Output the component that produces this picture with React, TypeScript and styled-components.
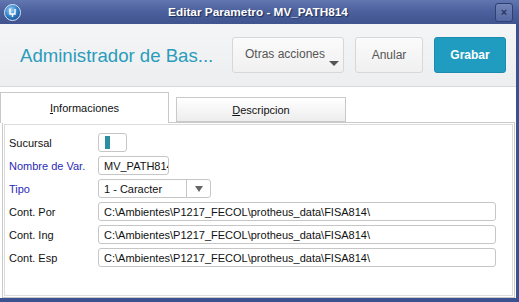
import styled, { createGlobalStyle } from 'styled-components'

const Global = createGlobalStyle`
  html, body { margin: 0; padding: 0; }
  body {
    font-family: "Liberation Sans", Arial, sans-serif;
    background: #3f5593;
  }
`

const Window = styled.div`
  width: 519px;
  height: 302px;
  display: flex;
  flex-direction: column;
  background: #3b5190;
  overflow: hidden;
`

const TitleBar = styled.div`
  height: 24px;
  flex: none;
  display: flex;
  align-items: center;
  padding: 0 6px 0 4px;
  background: linear-gradient(#6276b0, #4a5f9c 50%, #40558f);
`

const TitleText = styled.div`
  flex: 1;
  text-align: center;
  color: #fff;
  font-weight: bold;
  font-size: 11.8px;
  text-shadow: 1px 1px 1px #1c2a55;
`

const CloseBtn = styled.div`
  width: 16px;
  height: 17px;
  border: 1px solid #2f3f72;
  border-radius: 3px;
  background: linear-gradient(#7384b8, #5468a2);
  display: flex;
  align-items: center;
  justify-content: center;
  color: #2a3560;
  font-size: 11px;
  font-weight: bold;
`

const Body = styled.div`
  flex: 1;
  display: flex;
  flex-direction: column;
  background: #fff;
  margin: 0 3px 4px 0;
`

const Header = styled.div`
  height: 62px;
  flex: none;
  display: flex;
  align-items: center;
  padding: 0 10px 0 20px;
  background: linear-gradient(#f4f5f6, #eceeef);
  border-bottom: 1px solid #d8d9da;
`

const AppTitle = styled.div`
  flex: 1;
  color: #2b9cbc;
  font-size: 18.6px;
  padding-top: 1px;
`

const Actions = styled.div`
  display: flex;
  gap: 11px;
  align-items: center;
`

const Btn = styled.div<{ $w: number; $primary?: boolean }>`
  position: relative;
  width: ${(p) => p.$w}px;
  height: 36px;
  box-sizing: border-box;
  border-radius: 3px;
  display: flex;
  align-items: center;
  justify-content: center;
  font-size: 12px;
  border: 1px solid ${(p) => (p.$primary ? '#1b8cad' : '#d6d7d8')};
  background: ${(p) =>
    p.$primary ? '#1f9cbf' : 'linear-gradient(#fbfbfb, #f0f0f0)'};
  color: ${(p) => (p.$primary ? '#fff' : '#555')};
  font-weight: ${(p) => (p.$primary ? 'bold' : 'normal')};
`

const MenuBtnLabel = styled.span`
  position: absolute;
  top: 9px;
  left: 12px;
`

const Caret = styled.span`
  position: absolute;
  right: 4px;
  bottom: 6px;
  width: 0;
  height: 0;
  border-left: 5px solid transparent;
  border-right: 5px solid transparent;
  border-top: 5px solid #555;
`

const TabBar = styled.div`
  display: flex;
  align-items: flex-end;
  gap: 7px;
  margin-top: 5px;
  height: 30px;
  flex: none;
  position: relative;
  z-index: 1;
`

const Tab = styled.div<{ $active?: boolean }>`
  box-sizing: border-box;
  width: ${(p) => (p.$active ? 169 : 170)}px;
  height: ${(p) => (p.$active ? 31 : 25)}px;
  border: 1px solid #c9c9c9;
  border-bottom: ${(p) => (p.$active ? 'none' : '1px solid #c9c9c9')};
  background: ${(p) =>
    p.$active ? '#fff' : 'linear-gradient(#ffffff, #ededed)'};
  display: flex;
  align-items: center;
  justify-content: center;
  font-size: 11px;
  color: #111;
  margin-bottom: ${(p) => (p.$active ? -1 : 0)}px;
`

const Panel = styled.div`
  flex: 1;
  margin: 0 1px 0 2px;
  border: 1px solid #c9c9c9;
  box-shadow: inset 0 0 0 1px #fff, inset 0 0 0 2px #dcdcdc;
  padding: 10px 18px 0 6px;
  display: grid;
  grid-template-columns: 89px 1fr;
  grid-auto-rows: 19px;
  row-gap: 4px;
  align-items: center;
`

const Label = styled.div<{ $link?: boolean }>`
  font-size: 11px;
  color: ${(p) => (p.$link ? '#2a2ab8' : '#111')};
`

const Field = styled.div<{ $w?: number }>`
  box-sizing: border-box;
  height: 19px;
  width: ${(p) => (p.$w ? `${p.$w}px` : '100%')};
  border: 1px solid #c6c6c6;
  border-radius: 3px;
  background: #fff;
  font-size: 11px;
  color: #111;
  display: flex;
  align-items: center;
  padding-left: 5px;
  white-space: nowrap;
  overflow: hidden;
`

const Swatch = styled.span`
  width: 5px;
  height: 13px;
  background: #2a8fa0;
  margin-left: 1px;
`

const Select = styled(Field)`
  padding: 0;
`

const SelectText = styled.span`
  flex: 1;
  padding-left: 5px;
`

const SelectArrow = styled.span`
  width: 23px;
  height: 100%;
  border-left: 1px solid #c6c6c6;
  display: flex;
  align-items: center;
  justify-content: center;
  &::after {
    content: '';
    border-left: 4px solid transparent;
    border-right: 4px solid transparent;
    border-top: 6px solid #666;
  }
`

const path = 'C:\\Ambientes\\P1217_FECOL\\protheus_data\\FISA814\\'

export default function App() {
  return (
    <>
      <Global />
      <Window>
        <TitleBar>
          <svg width="17" height="17" viewBox="0 0 17 17">
            <defs>
              <radialGradient id="g" cx="40%" cy="35%" r="70%">
                <stop offset="0" stopColor="#9fd3f5" />
                <stop offset="0.6" stopColor="#2f7cc4" />
                <stop offset="1" stopColor="#1b4f93" />
              </radialGradient>
            </defs>
            <circle cx="8.5" cy="8.5" r="8" fill="url(#g)" stroke="#d8e6f6" strokeWidth="1" />
            <path d="M6 4.5v5.5h5V5" fill="none" stroke="#fff" strokeWidth="1.4" />
            <path d="M8.5 10v3" stroke="#fff" strokeWidth="1.4" />
          </svg>
          <TitleText>Editar Parametro - MV_PATH814</TitleText>
          <CloseBtn>×</CloseBtn>
        </TitleBar>
        <Body>
          <Header>
            <AppTitle>Administrador de Bas...</AppTitle>
            <Actions>
              <Btn $w={112}>
                <MenuBtnLabel>Otras acciones</MenuBtnLabel>
                <Caret />
              </Btn>
              <Btn $w={68}>Anular</Btn>
              <Btn $w={72} $primary>
                Grabar
              </Btn>
            </Actions>
          </Header>
          <TabBar>
            <Tab $active>
              <span>
                <u>I</u>nformaciones
              </span>
            </Tab>
            <Tab>
              <span>
                <u>D</u>escripcion
              </span>
            </Tab>
          </TabBar>
          <Panel>
            <Label>Sucursal</Label>
            <Field $w={29}>
              <Swatch />
            </Field>
            <Label $link>Nombre de Var.</Label>
            <Field $w={71}>MV_PATH814</Field>
            <Label $link>Tipo</Label>
            <Select $w={113}>
              <SelectText>1 - Caracter</SelectText>
              <SelectArrow />
            </Select>
            <Label>Cont. Por</Label>
            <Field>{path}</Field>
            <Label>Cont. Ing</Label>
            <Field>{path}</Field>
            <Label>Cont. Esp</Label>
            <Field>{path}</Field>
          </Panel>
        </Body>
      </Window>
    </>
  )
}
